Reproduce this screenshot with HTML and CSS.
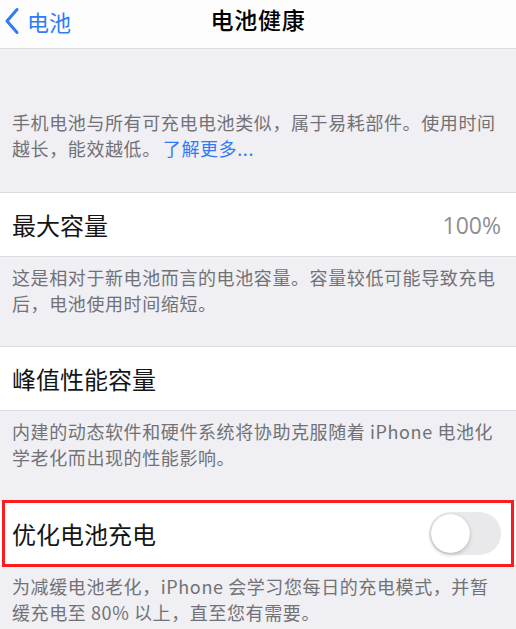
FILE: index.html
```html
<!DOCTYPE html>
<html lang="zh-CN">

<head>
    <meta charset="UTF-8">
    <meta name="viewport" content="width=device-width, initial-scale=1.0">
    <title>电池健康</title>
    <link rel="stylesheet" href="styles.css">
</head>

<body>

    <!-- Navigation bar -->
    <div class="nav-bar">
        <a class="back-link" href="#">
            <svg class="back-icon" width="16" height="28" viewBox="0 0 16 28">
                <path d="M13 2.5 L3 14 L13 25.5" fill="none" stroke="#2f7cf6" stroke-width="3" stroke-linecap="round" stroke-linejoin="round" />
            </svg>
            <span>电池</span>
        </a>
        <div class="nav-title">电池健康</div>
    </div>

    <!-- Intro -->
    <div class="intro">
        <p class="footnote">手机电池与所有可充电电池类似，属于易耗部件。使用时间<br>越长，能效越低。<a class="link" href="#">了解更多...</a></p>
    </div>

    <!-- Maximum capacity -->
    <div class="row">
        <span class="row-label">最大容量</span>
        <span class="row-value">100%</span>
    </div>
    <div class="section-footer">
        <p class="footnote">这是相对于新电池而言的电池容量。容量较低可能导致充电后，电池使用时间缩短。</p>
    </div>

    <!-- Peak performance -->
    <div class="row">
        <span class="row-label">峰值性能容量</span>
    </div>
    <div class="section-footer">
        <p class="footnote">内建的动态软件和硬件系统将协助克服随着 iPhone 电池化学老化而出现的性能影响。</p>
    </div>

    <!-- Optimized charging -->
    <div class="row row-marked">
        <span class="row-label">优化电池充电</span>
        <div class="switch">
            <div class="switch-knob"></div>
        </div>
    </div>
    <div class="section-footer">
        <p class="footnote">为减缓电池老化，iPhone 会学习您每日的充电模式，并暂缓充电至 80% 以上，直至您有需要。</p>
    </div>

</body>

</html>
```

FILE: styles.css
```css
body {
    font-family: "Noto Sans CJK SC", "Noto Sans", sans-serif;
    margin: 0;
    padding: 0;
    background-color: #efeff4;
    color: #111;
    overflow: hidden;
}

/* Navigation bar */
.nav-bar {
    height: 48px;
    background-color: #fdfdfd;
    border-bottom: 1px solid #dcdce0;
    display: flex;
    align-items: center;
    justify-content: center;
    position: relative;
}

.back-link {
    position: absolute;
    left: 4px;
    top: 6px;
    display: flex;
    align-items: center;
    gap: 7px;
    color: #2f7cf6;
    text-decoration: none;
    font-size: 22px;
    line-height: 30px;
}

.nav-title {
    font-size: 23px;
    font-weight: 500;
    color: #000;
    margin-top: -10px;
    letter-spacing: 0.8px;
}

/* Footnote text */
.footnote {
    margin: 0;
    font-size: 18px;
    line-height: 26px;
    letter-spacing: 0.6px;
    color: #727276;
}

.link {
    color: #2f7cf6;
    text-decoration: none;
    margin-left: 2px;
}

.intro {
    padding: 60px 14px 31px 12px;
    border-bottom: 1px solid #dcdce0;
}

/* Rows */
.row {
    height: 63px;
    background-color: #fff;
    display: flex;
    align-items: center;
    justify-content: space-between;
    padding: 0 15px 0 12px;
    border-bottom: 1px solid #dcdce0;
}

.row-label {
    font-size: 24px;
    color: #151515;
}

.row-value {
    font-size: 23px;
    color: #8e8e93;
    font-family: "Open Sans", "Noto Sans", sans-serif;
}

.section-footer {
    padding: 7px 14px 30px 12px;
    border-bottom: 1px solid #dcdce0;
}

.section-footer:last-child {
    border-bottom: none;
}

/* Highlighted row */
.row-marked {
    position: relative;
    height: 64px;
}

.row-marked::after {
    content: "";
    position: absolute;
    left: 2px;
    right: 2px;
    top: -1px;
    bottom: -2px;
    border: 3px solid #fb1d1d;
}

/* Switch */
.switch {
    width: 72px;
    height: 43px;
    border-radius: 22px;
    background-color: #e9e9eb;
    position: relative;
}

.switch-knob {
    position: absolute;
    left: 2px;
    top: 2px;
    width: 39px;
    height: 39px;
    border-radius: 50%;
    background-color: #fff;
    box-shadow: 0 2px 4px rgba(0, 0, 0, 0.18), 0 0 1px rgba(0, 0, 0, 0.2);
}
```
